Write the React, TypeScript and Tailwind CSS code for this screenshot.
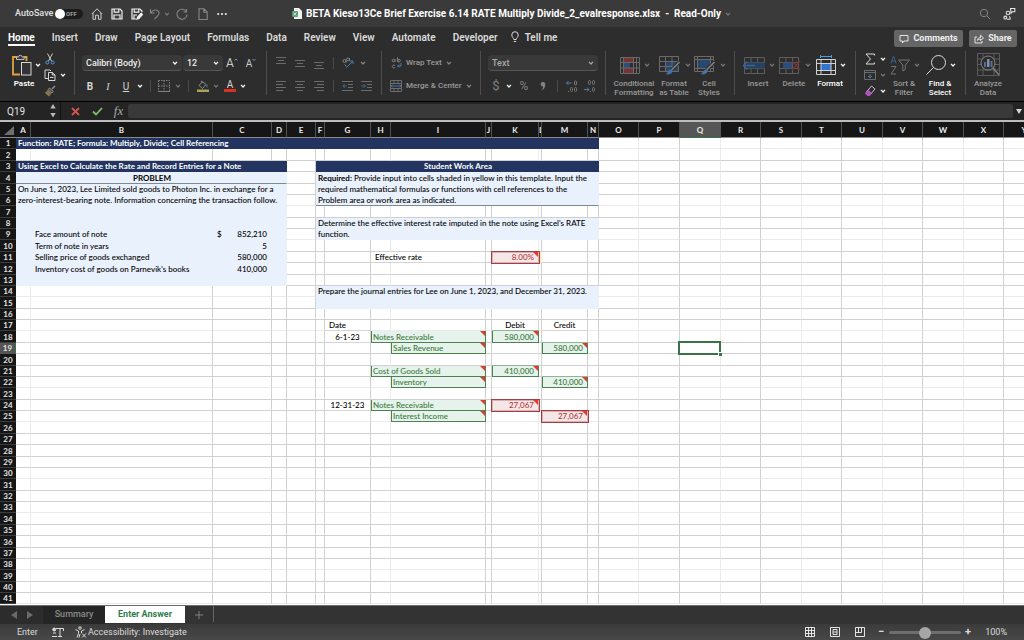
import React from 'react';
import clsx from 'clsx';

const COLUMNS = [
    { name: 'A', width: 'w-[15px]', soft: true },
    { name: 'B', width: 'w-[182px]' },
    { name: 'C', width: 'w-[59px]' },
    { name: 'D', width: 'w-[15px]' },
    { name: 'E', width: 'w-[29px]' },
    { name: 'F', width: 'w-[9px]' },
    { name: 'G', width: 'w-[46px]' },
    { name: 'H', width: 'w-[20px]', soft: true },
    { name: 'I', width: 'w-[95px]' },
    { name: 'J', width: 'w-[6px]' },
    { name: 'K', width: 'w-[47px]', soft: true },
    { name: 'L', width: 'w-[3px]' },
    { name: 'M', width: 'w-[46px]' },
    { name: 'N', width: 'w-[11px]' },
    { name: 'O', width: 'w-[40px]', soft: true },
    { name: 'P', width: 'w-[41px]' },
    { name: 'Q', width: 'w-[41px]', soft: true },
    { name: 'R', width: 'w-[40px]' },
    { name: 'S', width: 'w-[41px]', soft: true },
    { name: 'T', width: 'w-[40px]' },
    { name: 'U', width: 'w-[41px]', soft: true },
    { name: 'V', width: 'w-[40px]' },
    { name: 'W', width: 'w-[41px]', soft: true },
    { name: 'X', width: 'w-[40px]' },
    { name: 'Y', width: 'w-[41px]' },
];

const ROW_COUNT = 41;

type Cell = {
    span?: number;
    text?: React.ReactNode;
    look: string;
    note?: boolean;
    selected?: boolean;
};

const NAVY = 'bg-[#22345f] border-[#22345f] text-white font-bold pl-0.5';
const PALE = 'bg-[#e9f1fc] border-[#e9f1fc] pl-0.5';
const PALE_RULE = 'bg-[#e9f1fc] border-r-[#e9f1fc] border-b-[#808890] pl-0.5';
const PLAIN = 'border-[#d4d4d4]';
const GREEN = 'bg-[#e6f2ec] text-[#3a7a3a] border-l border-l-[#4b8250] border-r-[#4b8250] border-b-[#4b8250]';
const GREEN_BOX = 'bg-[#e6f2ec] text-[#3a7a3a] text-right pr-1 border-l border-[#4b8250] shadow-[0_-1px_0_#8fb596]';
const RED_BOX = 'z-10 bg-[#f5e6e8] text-[#b03a3a] text-right pr-1 border-[#d9b0b3] shadow-[0_0_0_1px_#a04040,inset_1px_1px_0_#d9b0b3]';

const SHEET: Record<number, Record<string, Cell>> = {
    1: { A: { span: 14, look: NAVY, text: 'Function: RATE; Formula: Multiply, Divide; Cell Referencing' } },
    3: {
        A: { span: 4, look: NAVY, text: 'Using Excel to Calculate the Rate and Record Entries for a Note' },
        F: { span: 9, look: clsx(NAVY, 'text-center'), text: 'Student Work Area' },
    },
    4: {
        A: { span: 4, look: clsx(PALE_RULE, 'text-center font-bold'), text: 'PROBLEM' },
        F: { span: 9, look: PALE, text: <><b>Required:</b> Provide input into cells shaded in yellow in this template. Input the</> },
    },
    5: {
        A: { span: 4, look: PALE, text: 'On June 1, 2023, Lee Limited sold goods to Photon Inc. in exchange for a' },
        F: { span: 9, look: PALE, text: 'required mathematical formulas or functions with cell references to the' },
    },
    6: {
        A: { span: 4, look: PALE, text: 'zero-interest-bearing note. Information concerning the transaction follow.' },
        F: { span: 9, look: PALE_RULE, text: 'Problem area or work area as indicated.' },
    },
    7: { A: { span: 4, look: PALE } },
    8: {
        A: { span: 4, look: PALE },
        F: { span: 9, look: PALE, text: "Determine the effective interest rate imputed in the note using Excel's RATE" },
    },
    9: {
        A: { look: PALE },
        B: { look: clsx(PALE, 'pl-1'), text: 'Face amount of note' },
        C: { look: clsx(PALE, 'pr-1'), text: <span className="flex justify-between pl-0.5"><span>$</span><span>852,210</span></span> },
        D: { look: PALE },
        F: { span: 9, look: PALE, text: 'function.' },
    },
    10: {
        A: { look: PALE },
        B: { look: clsx(PALE, 'pl-1'), text: 'Term of note in years' },
        C: { look: clsx(PALE, 'pr-1 text-right'), text: '5' },
        D: { look: PALE },
    },
    11: {
        A: { look: PALE },
        B: { look: clsx(PALE, 'pl-1'), text: 'Selling price of goods exchanged' },
        C: { look: clsx(PALE, 'pr-1 text-right'), text: '580,000' },
        D: { look: PALE },
        H: { span: 2, look: clsx(PLAIN, 'pl-1'), text: 'Effective rate' },
        K: { look: RED_BOX, text: '8.00%', note: true },
        L: { look: 'bg-[#fdeecb] border-[#fdeecb]' },
    },
    12: {
        A: { look: PALE },
        B: { look: clsx(PALE, 'pl-1'), text: "Inventory cost of goods on Parnevik's books" },
        C: { look: clsx(PALE, 'pr-1 text-right'), text: '410,000' },
        D: { look: PALE },
    },
    13: { A: { span: 4, look: PALE } },
    14: { F: { span: 9, look: PALE, text: 'Prepare the journal entries for Lee on June 1, 2023, and December 31, 2023.' } },
    15: { F: { span: 9, look: PALE } },
    17: {
        G: { look: clsx(PLAIN, 'pl-1'), text: 'Date' },
        K: { look: clsx(PLAIN, 'text-center'), text: 'Debit' },
        M: { look: clsx(PLAIN, 'text-center'), text: 'Credit' },
    },
    18: {
        G: { look: clsx(PLAIN, 'text-center'), text: '6-1-23' },
        H: { span: 2, look: clsx(GREEN, 'pl-px'), text: 'Notes Receivable', note: true },
        K: { look: GREEN_BOX, text: '580,000', note: true },
    },
    19: {
        I: { look: clsx(GREEN, 'pl-px'), text: 'Sales Revenue', note: true },
        M: { look: GREEN_BOX, text: '580,000', note: true },
        Q: { look: PLAIN, selected: true },
    },
    21: {
        H: { span: 2, look: clsx(GREEN, 'pl-px'), text: 'Cost of Goods Sold', note: true },
        K: { look: GREEN_BOX, text: '410,000', note: true },
    },
    22: {
        I: { look: clsx(GREEN, 'pl-px'), text: 'Inventory', note: true },
        M: { look: GREEN_BOX, text: '410,000', note: true },
    },
    24: {
        G: { look: clsx(PLAIN, 'text-center'), text: '12-31-23' },
        H: { span: 2, look: clsx(GREEN, 'pl-px'), text: 'Notes Receivable', note: true },
        K: { look: RED_BOX, text: '27,067', note: true },
    },
    25: {
        I: { look: clsx(GREEN, 'pl-px'), text: 'Interest Income', note: true },
        M: { look: RED_BOX, text: '27,067', note: true },
    },
};

const TABS = ['Home', 'Insert', 'Draw', 'Page Layout', 'Formulas', 'Data', 'Review', 'View', 'Automate', 'Developer'];

/* ---------- small pieces ---------- */

function Chevron({ className = 'text-white' }: { className?: string }) {
    return (
        <svg viewBox="0 0 6 4" className={clsx('w-1.5 h-1 shrink-0', className)} fill="none" stroke="currentColor" strokeWidth="1.2">
            <path d="M1 .8 3 3 5 .8" />
        </svg>
    );
}

function Tool({ label, className, children }: { label: string; className: string; children: React.ReactNode }) {
    return (
        <button type="button" aria-label={label} className={clsx('flex h-4 items-center justify-center shrink-0', className)}>
            {children}
        </button>
    );
}

function Divider({ box }: { box: string }) {
    return (
        <span className={clsx('flex h-3 justify-center shrink-0', box)}>
            <span className="w-px bg-[#4a4a4a]" />
        </span>
    );
}

function GroupLine() {
    return <span className="w-px h-11 bg-[#4d4d4d] shrink-0" />;
}

function Dropdown({ label, value, className, dim }: { label: string; value: string; className: string; dim?: boolean }) {
    return (
        <div className={clsx('relative h-4 shrink-0', className)}>
            <select
                aria-label={label}
                className={clsx('block w-full h-4 appearance-none rounded-sm bg-[#393939] border-b border-[#565656] pl-1 text-[9px] leading-[14px] font-medium', dim ? 'text-[#a8a8a8]' : 'text-[#ececec]')}
            >
                <option>{value}</option>
            </select>
            <span className="absolute right-1 top-1.5 pointer-events-none">
                <Chevron className={clsx('block', dim ? 'text-[#a8a8a8]' : 'text-white')} />
            </span>
        </div>
    );
}

function BigTool({ className, icon, lines, active }: { className: string; icon: React.ReactNode; lines: string[]; active?: boolean }) {
    return (
        <button type="button" className={clsx('flex flex-col items-center shrink-0', className, active ? 'text-white' : 'text-[#9a9a9a]')}>
            <span className={clsx('flex h-7 items-center gap-1 -mr-0.5', !active && 'opacity-80')}>
                {icon}
                <Chevron className={active ? 'text-white' : 'text-[#8a8a8a]'} />
            </span>
            {lines.map((line) => (
                <span key={line} className="text-[8px] leading-[9px] font-medium whitespace-nowrap">{line}</span>
            ))}
        </button>
    );
}

function Lines({ rows }: { rows: [number, number, number][] }) {
    return (
        <svg viewBox="0 0 12 12" className="size-3 shrink-0" stroke="#6c6c6c" strokeWidth="1">
            {rows.map(([x1, x2, y]) => <path key={y} d={`M${x1} ${y + 0.5}H${x2}`} />)}
        </svg>
    );
}

function Indent({ flip }: { flip?: boolean }) {
    return (
        <svg viewBox="0 0 12 12" className="size-3 shrink-0" stroke="#6c6c6c" fill="none">
            <path d="M0 1.5h11M6 4.5h5M6 7.5h5M0 10.5h11" />
            <path d={flip ? 'M0 6h4M2.5 4l2 2-2 2' : 'M1 6h4M2.8 4l-2 2 2 2'} stroke="#41698f" />
        </svg>
    );
}

/* ---------- title bar ---------- */

function TitleBar() {
    return (
        <header className="flex h-[27px] shrink-0 items-center bg-[#3a3a3a] text-[#e0e0e0]">
            <div className="flex flex-1 items-center pl-[15px]">
                <label htmlFor="autosave" className="text-[9px] font-medium w-10 whitespace-nowrap">AutoSave</label>
                <span className="relative flex h-2.5 w-7 items-center rounded-full bg-[#1c1c1c]">
                    <input id="autosave" type="checkbox" role="switch" className="peer absolute inset-0 appearance-none" />
                    <span className="size-2.5 rounded-full bg-white pointer-events-none" />
                    <span className="pl-px text-[6px] font-medium text-[#b8b8b8] pointer-events-none">OFF</span>
                </span>
                <div className="flex items-center pl-1">
                    <Tool label="Home" className="w-5">
                        <svg viewBox="0 0 12 12" className="size-3" fill="none" stroke="#cfcfcf"><path d="M.8 6 6 .8 11.2 6M2 5v6.3h2.6V7.2h2.8v4.1H10V5" /></svg>
                    </Tool>
                    <Tool label="Save" className="w-5">
                        <svg viewBox="0 0 12 12" className="size-3" fill="none" stroke="#f0f0f0" strokeWidth="1.2"><path d="M1 1h8l2 2v8H1zM3.2 1v3.2h4.6V1M3 11V7h6v4" /></svg>
                    </Tool>
                    <Tool label="Save as" className="w-[19px]">
                        <svg viewBox="0 0 12 12" className="size-3" fill="none" stroke="#f0f0f0" strokeWidth="1.2"><path d="M5 11H1V1h8l2 2v1M3.2 1v3.2h4.6V1M3 11V7h3" /><path d="m6 11 .6-2L10.2 5.2l1.3 1.3L8 10.4z" fill="#f0f0f0" /></svg>
                    </Tool>
                    <Tool label="Undo" className="w-[18px]">
                        <svg viewBox="0 0 12 12" className="size-3" fill="none" stroke="#858585" strokeWidth="1.1"><path d="M1.5 1v4h4M1.5 5C4 1.2 9 1 10 4.5c.6 2.5-2 4-4.5 6.5" /></svg>
                    </Tool>
                    <Chevron className="text-[#757575]" />
                    <Tool label="Redo" className="w-6">
                        <svg viewBox="0 0 12 12" className="size-3" fill="none" stroke="#858585" strokeWidth="1.1"><path d="M10.5 1v3h-3M10.5 4A5 5 0 1 0 11 6.5" /></svg>
                    </Tool>
                    <Tool label="New" className="w-[18px]">
                        <svg viewBox="0 0 12 12" className="size-3" fill="none" stroke="#858585" strokeWidth="1.1"><path d="M2 .8h5L10.2 4v7.5H2zM6.8.8v3.5h3.4" /></svg>
                    </Tool>
                    <Tool label="More" className="w-5">
                        <svg viewBox="0 0 10 4" className="w-2.5 h-1" fill="#eaeaea"><circle cx="1.2" cy="2" r="1.1" /><circle cx="5" cy="2" r="1.1" /><circle cx="8.8" cy="2" r="1.1" /></svg>
                    </Tool>
                </div>
            </div>
            <div className="flex items-center gap-1 pr-2">
                <svg viewBox="0 0 10 11" className="w-2.5 h-[11px]"><path d="M2 0h5l3 3v8H2z" fill="#f0f3f0" /><rect y="3" width="6" height="6" rx="1" fill="#5e9c74" /><path d="m1.7 4.5 2.6 3M4.3 4.500l-2.6 3" stroke="#dff0e4" strokeWidth=".8" /></svg>
                <h1 className="text-[10px] font-bold text-white whitespace-pre">BETA Kieso13Ce Brief Exercise 6.14 RATE Multiply Divide_2_evalresponse.xlsx  -  Read-Only</h1>
                <Chevron className="text-[#757575]" />
            </div>
            <div className="flex flex-1 items-center justify-end gap-3 pr-2">
                <svg viewBox="0 0 12 12" className="size-3" fill="none" stroke="#858585"><circle cx="5" cy="5" r="3.7" /><path d="m7.8 7.8 3.4 3.4" /></svg>
                <svg viewBox="0 0 13 13" className="size-[13px]" fill="none" stroke="#e4e4e4" strokeWidth="1.1"><circle cx="5" cy="6" r="1.8" /><circle cx="2.3" cy="10.5" r="1.4" /><path d="M4 12.3h2.5c1 0 1-2.500-.5-2.800M7.5 1.5h4.3v3.3H9.5L8 6.2V4.8z" /></svg>
            </div>
        </header>
    );
}

/* ---------- ribbon ---------- */

function RibbonTabs() {
    return (
        <div className="flex h-5 shrink-0 items-start justify-between pl-2 pr-[7px]">
            <nav className="flex gap-[17px] pt-1 text-[10px] leading-[13px] font-semibold text-[#dadada]">
                {TABS.map((tab) => (
                    <a key={tab} href="#" className={clsx('whitespace-nowrap', tab === 'Home' && 'h-[15px] border-b-2 border-white text-white font-bold')}>{tab}</a>
                ))}
                <a href="#" className="flex gap-1.5 -ml-1 whitespace-nowrap">
                    <svg viewBox="0 0 8 12" className="w-2 h-3" fill="none" stroke="#dadada"><path d="M2.8 8.5C2.8 7 .8 6.3.8 3.9a3.2 3.2 0 0 1 6.4 0C7.2 6.3 5.2 7 5.2 8.5zM2.8 10.5h2.4" /></svg>
                    Tell me
                </a>
            </nav>
            <div className="flex gap-1.5 pt-[3px] text-[9px] font-bold text-[#efefef]">
                <button type="button" className="flex h-[17px] w-[69px] items-center justify-center gap-1 rounded-xs bg-[#656565]">
                    <svg viewBox="0 0 10 10" className="size-2.5" fill="none" stroke="#e4e4e4"><path d="M1 1.5h8V7H5L3.5 9V7H1z" /></svg>
                    Comments
                </button>
                <button type="button" className="flex h-[17px] w-12 items-center justify-center gap-1 rounded-xs bg-[#656565]">
                    <svg viewBox="0 0 10 10" className="size-2.5" fill="none" stroke="#e4e4e4"><path d="M3 3H1v6h7V7M3.5 6.5c0-2 1.5-3 3-3V1.2L9.5 4l-3 2.5V5C5 5 4 5.500 3.500 6.500z" /></svg>
                    Share
                </button>
            </div>
        </div>
    );
}

function ClipboardGroup() {
    return (
        <div className="flex w-[74px] pl-2 shrink-0">
            <button type="button" className="flex w-8 flex-col items-center">
                <span className="flex h-7 items-center gap-[3px] pl-1">
                    <svg viewBox="0 0 20 22" className="w-5 h-[22px]" fill="none">
                        <path d="M8 20.5H1V3h4.5M11.5 3h3v4" stroke="#e0a344" strokeWidth="1.8" />
                        <path d="M4.5 5.5V3h2a1.8 1.8 0 0 1 3.6 0h2v2.500z" fill="#3a3a3a" stroke="#bdbdbd" />
                        <rect x="9.5" y="8.5" width="9.5" height="12.5" fill="#333" stroke="#d6d6d6" />
                    </svg>
                    <Chevron />
                </span>
                <span className="text-[8px] leading-[9px] font-semibold text-white">Paste</span>
            </button>
            <div className="flex flex-col pl-1">
                <Tool label="Cut" className="w-3">
                    <svg viewBox="0 0 10 12" className="w-2.5 h-3" fill="none"><path d="M2.500.5 6.500 8M7.500.5 3.500 8" stroke="#c8c8c8" /><circle cx="2.3" cy="9.5" r="1.5" stroke="#4f9be0" /><circle cx="7.7" cy="9.5" r="1.5" stroke="#4f9be0" /></svg>
                </Tool>
                <span className="flex items-center gap-1">
                    <Tool label="Copy" className="w-3">
                        <svg viewBox="0 0 12 12" className="size-3" fill="none" stroke="#d6d6d6"><path d="M4 9.5H1V1h5l1 1M4.5 3.5h4L11 6v5.5H4.5zM8.3 3.5V6H11M6 8.5h3.5" /></svg>
                    </Tool>
                    <Chevron />
                </span>
                <Tool label="Format painter" className="w-3">
                    <svg viewBox="0 0 12 12" className="size-3" fill="none"><path d="M11 1 8 4" stroke="#8c8c8c" strokeWidth="1.6" /><path d="m5.500 3 3.800 3.500L8 8 4 4.500z" stroke="#8c8c8c" fill="#4a4a4a" /><path d="M3.800 5 7.500 8.300 5 11.500.8 8z" fill="#8a744a" /></svg>
                </Tool>
            </div>
        </div>
    );
}

function FontGroup() {
    return (
        <div className="flex w-[191px] flex-col gap-[7px] pl-[7px] pt-1 shrink-0">
            <div className="flex items-center">
                <Dropdown label="Font" value="Calibri (Body)" className="w-[100px]" />
                <Dropdown label="Font size" value="12" className="w-10 ml-px" />
                <Tool label="Increase font size" className="w-[18px] text-[#c8c8c8]">
                    <span className="text-xs">A</span>
                    <svg viewBox="0 0 4 10" className="w-1 h-2.5" fill="none" stroke="#4f9be0"><path d="M.5 2.500 2 1l1.500 1.500" /></svg>
                </Tool>
                <Tool label="Decrease font size" className="w-5 text-[#c8c8c8]">
                    <span className="text-[10px]">A</span>
                    <svg viewBox="0 0 4 10" className="w-1 h-2.5" fill="none" stroke="#4f9be0"><path d="M.5 1 2 2.500 3.500 1" /></svg>
                </Tool>
            </div>
            <div className="flex items-center text-[10px] text-[#d6d6d6]">
                <Tool label="Bold" className="w-4"><b>B</b></Tool>
                <Tool label="Italic" className="w-5"><i className="font-['Liberation_Serif']">I</i></Tool>
                <Tool label="Underline" className="w-4"><u>U</u></Tool>
                <Tool label="Underline styles" className="w-3"><Chevron /></Tool>
                <Divider box="w-2" />
                <Tool label="Borders" className="w-5">
                    <svg viewBox="0 0 12 12" className="size-3" fill="none" stroke="#808080"><path d="M.5.5h11v11M.5.5v11M6 .5v11M.5 6h11" strokeDasharray="1.5 1" /><path d="M0 11.5h12" /></svg>
                </Tool>
                <Tool label="Border styles" className="w-2"><Chevron className="text-[#757575]" /></Tool>
                <Divider box="w-3" />
                <Tool label="Fill colour" className="w-[18px]">
                    <svg viewBox="0 0 12 12" className="size-3" fill="none"><path d="m2 5.500 3.500-4 3.500 3-3.500 4zM4 .8l2 2" stroke="#8c8c8c" /><path d="M10 4.500v3" stroke="#4d7ca8" /><rect y="9.5" width="12" height="2.5" fill="#a9a558" /></svg>
                </Tool>
                <Tool label="Fill colours" className="w-2"><Chevron className="text-[#757575]" /></Tool>
                <Tool label="Font colour" className="w-5">
                    <span className="flex flex-col items-center">
                        <span className="text-[10px] leading-[9px]">A</span>
                        <span className="h-[3px] w-3 bg-[#e03020]" />
                    </span>
                </Tool>
                <Tool label="Font colours" className="w-1.5"><Chevron /></Tool>
            </div>
        </div>
    );
}

function AlignGroup() {
    return (
        <div className="flex w-[114px] flex-col gap-[7px] pl-1 pt-1 shrink-0">
            <div className="flex items-center">
                <Tool label="Top align" className="w-5"><Lines rows={[[1, 11, 0], [3, 9, 3], [1, 11, 6]]} /></Tool>
                <Tool label="Middle align" className="w-[18px]"><Lines rows={[[1, 11, 3], [3, 9, 6], [1, 11, 9]]} /></Tool>
                <Tool label="Bottom align" className="w-5"><Lines rows={[[1, 11, 5], [3, 9, 8], [1, 11, 11]]} /></Tool>
                <Divider box="w-2" />
                <Tool label="Orientation" className="w-[22px]">
                    <svg viewBox="0 0 12 12" className="size-3" fill="none" stroke="#808080"><circle cx="2.5" cy="4" r="1.5" /><circle cx="6" cy="2.5" r="1.5" /><path d="M4 2.500v3M2.500 7.500l2 2M7.500 1v3" /><path d="M4.500 10.500 11 4M11 7V4H8" stroke="#4d7ca8" /></svg>
                </Tool>
                <Tool label="Orientations" className="w-2"><Chevron className="text-[#858585]" /></Tool>
            </div>
            <div className="flex items-center">
                <Tool label="Align left" className="w-5"><Lines rows={[[1, 11, 1], [1, 8, 4], [1, 11, 7], [1, 8, 10]]} /></Tool>
                <Tool label="Centre" className="w-[18px]"><Lines rows={[[1, 11, 1], [3, 9, 4], [1, 11, 7], [3, 9, 10]]} /></Tool>
                <Tool label="Align right" className="w-5"><Lines rows={[[1, 11, 1], [4, 11, 4], [1, 11, 7], [4, 11, 10]]} /></Tool>
                <Divider box="w-2" />
                <Tool label="Decrease indent" className="w-[22px]"><Indent /></Tool>
                <Tool label="Increase indent" className="w-4"><Indent flip /></Tool>
            </div>
        </div>
    );
}

function WrapGroup() {
    return (
        <div className="flex w-[98px] flex-col gap-[7px] pl-2 pt-1 text-[8px] font-medium text-[#9a9a9a] shrink-0">
            <button type="button" className="flex h-4 items-center gap-1 whitespace-nowrap">
                <svg viewBox="0 0 12 12" className="size-3" fill="none" stroke="#808080"><circle cx="3.5" cy="3.5" r="1.3" /><path d="M5 2v3M7.500.5v4.500" /><circle cx="9" cy="3.7" r="1.3" /><path d="M5 8.500a1.500 1.500 0 1 0 0 2" /><path d="M11 6v3H7.500M9 7.500 7.500 9 9 10.500" stroke="#4d7ca8" /></svg>
                Wrap Text
                <Chevron className="text-[#858585]" />
            </button>
            <button type="button" className="flex h-4 items-center gap-1 whitespace-nowrap">
                <svg viewBox="0 0 12 12" className="size-3" fill="none" stroke="#6c6c6c"><path d="M.5.5h11v11H.5zM.5 3.500h11M.5 8.500h11M4 .5v3M8 .5v3M4 8.500v3M8 8.500v3" /><path d="M1 6h10M2.500 4.700 1.200 6l1.300 1.300M9.500 4.700 10.800 6 9.500 7.300" stroke="#3f74b0" /></svg>
                Merge &amp; Center
                <Chevron className="text-[#858585]" />
            </button>
        </div>
    );
}

function NumberGroup() {
    return (
        <div className="flex w-[124px] flex-col gap-[7px] pl-[7px] pt-1 shrink-0">
            <Dropdown label="Number format" value="Text" className="w-[110px]" dim />
            <div className="flex items-center text-[13px] text-[#808080]">
                <Tool label="Currency" className="w-4">$</Tool>
                <Tool label="Currencies" className="w-2.5"><Chevron /></Tool>
                <Tool label="Percent" className="w-5 text-xs">%</Tool>
                <Tool label="Comma style" className="w-[18px]">
                    <svg viewBox="0 0 6 9" className="w-1.5 h-[9px]" fill="#808080"><path d="M.7 2.200a2.300 2.300 0 0 1 4.600 0C5.500 5 4 7.500 1.500 8.500 2.800 7 3.200 5.500 3 4.500 1.800 4.500.7 3.600.7 2.200z" /></svg>
                </Tool>
                <Divider box="w-2.5" />
                <Tool label="Increase decimal" className="w-5">
                    <svg viewBox="0 0 12 12" className="size-3" fill="none" stroke="#757575"><path d="M.5 3h5M2.500 1l-2 2 2 2" stroke="#4d7ca8" /><rect x="8.5" y="1" width="2" height="4" rx="1" /><rect x="4.5" y="7.5" width="2" height="4" rx="1" /><rect x="8.5" y="7.5" width="2" height="4" rx="1" /><path d="M2 11.500h1" /></svg>
                </Tool>
                <Tool label="Decrease decimal" className="w-4">
                    <svg viewBox="0 0 12 12" className="size-3" fill="none" stroke="#757575"><rect x="4.5" y=".5" width="2" height="4" rx="1" /><rect x="8.5" y=".5" width="2" height="4" rx="1" /><path d="M0 9.500h5M3 7.500l2 2-2 2" stroke="#4d7ca8" /><rect x="8.5" y="7.5" width="2" height="4" rx="1" /><path d="M6 11.500h1" /></svg>
                </Tool>
            </div>
        </div>
    );
}

function StylesGroup() {
    return (
        <div className="flex w-[128px] pl-2 shrink-0">
            <BigTool className="w-10 mr-0.5" lines={['Conditional', 'Formatting']} icon={
                <svg viewBox="0 0 20 17" className="w-5 h-[17px]" fill="none"><path d="M4 1h9v5H4zM4 11h9v5H4z" fill="#8a3535" /><path d="M4 6h6v5H4z" fill="#2c568c" /><path d="M.5.5h19v16H.5zM.5 5.5h19M.5 11h19M3.5.5v16M13.5.5v16M16.5.5v16" stroke="#7a7a7a" /></svg>
            } />
            <BigTool className="w-9" lines={['Format', 'as Table']} icon={
                <svg viewBox="0 0 22 19" className="w-[22px] h-[19px]" fill="none"><path d="M6 6h14v10H6z" fill="#294f80" /><path d="M.5.5h19v15H.5zM.5 5.5h19M.5 10.5h19M6.5.5v15M13 .5v15" stroke="#7a7a7a" /><path d="m20.5 6-8 8" stroke="#2d2d2d" strokeWidth="3.5" /><path d="m20.5 6-8 8" stroke="#9a9a9a" strokeWidth="1.6" /><path d="M12.5 13.5c-3-.5-3 3-6 4.500 3 1.300 7 0 7-3.500z" fill="#4a86c4" /></svg>
            } />
            <BigTool className="w-[34px]" lines={['Cell', 'Styles']} icon={
                <svg viewBox="0 0 22 19" className="w-[22px] h-[19px]" fill="none"><path d="M4 4h12v8H4z" fill="#294f80" /><path d="M.5.5h19v15H.5zM.5 3.5h19M.5 12.5h19M3.5.5v15M16.5.5v15" stroke="#7a7a7a" /><path d="m20.5 6-8 8" stroke="#2d2d2d" strokeWidth="3.5" /><path d="m20.5 6-8 8" stroke="#9a9a9a" strokeWidth="1.6" /><path d="M12.5 13.5c-3-.5-3 3-6 4.500 3 1.300 7 0 7-3.500z" fill="#4a86c4" /></svg>
            } />
        </div>
    );
}

function CellsGroup() {
    return (
        <div className="flex w-[120px] pl-[5px] shrink-0">
            <BigTool className="w-9" lines={['Insert']} icon={
                <svg viewBox="0 0 22 17" className="w-[22px] h-[17px]" fill="none"><path d="M1.5.5h20v16h-20zM1.5 5.5h20M1.5 11.5h20M8 .5v16M14.5.5v16" stroke="#6a6a6a" /><path d="M4 5.5h18v6H4z" fill="#26466e" /><path d="M0 8.500h12M4.500 4.500l-4 4 4 4" stroke="#3c72b0" strokeWidth="1.4" /></svg>
            } />
            <BigTool className="w-9" lines={['Delete']} icon={
                <svg viewBox="0 0 22 17" className="w-[22px] h-[17px]" fill="none"><path d="M.5.5h19v16H.5zM.5 5.5h19M.5 11.5h19M7 .5v16M13.5.5v16" stroke="#6a6a6a" /><path d="M4 5.5h9v6H4z" fill="#2a5590" /><path d="m13 4 8 9M21 4l-8 9" stroke="#8a3535" strokeWidth="1.4" /></svg>
            } />
            <BigTool className="w-9" active lines={['Format']} icon={
                <svg viewBox="0 0 20 21" className="w-5 h-[21px]" fill="none"><path d="M4.500 1.500h11M4.500 0v3M15.500 0v3" stroke="#4f9be0" /><path d="M5 9h10v6H5z" fill="#2f74d0" /><path d="M.5 4.500h19v15H.5zM.5 8.500h19M.5 15.500h19M5 4.500v15M15 4.500v15" stroke="#d0d0d0" /></svg>
            } />
        </div>
    );
}

function EditingGroup() {
    return (
        <div className="flex w-[109px] shrink-0">
            <div className="flex w-[31px] flex-col pl-2">
                <span className="flex items-center gap-1">
                    <Tool label="AutoSum" className="w-3">
                        <svg viewBox="0 0 10 12" className="w-2.5 h-3" fill="none" stroke="#dcdcdc"><path d="M9.500 2.500V1H1l4.500 5L1 11h8.500V9.500" /></svg>
                    </Tool>
                    <Chevron />
                </span>
                <span className="flex items-center gap-1">
                    <Tool label="Fill" className="w-3">
                        <svg viewBox="0 0 12 10" className="w-3 h-2.5" fill="none"><path d="M.5.5h11v9H.5zM.5 2.500h11" stroke="#6c6c6c" /><path d="M6 4v4M4 6l2 2 2-2" stroke="#4d7ca8" /></svg>
                    </Tool>
                    <Chevron className="text-[#757575]" />
                </span>
                <span className="flex items-center gap-1">
                    <Tool label="Clear" className="w-3">
                        <svg viewBox="0 0 12 12" className="size-3" fill="none"><path d="M7.500 1 11 4l-5.500 6.500L2 7.500z" stroke="#d8b8dc" /><path d="M4.500 5 8 8l-2.500 3h-2L1 8.700z" fill="#b04fc0" /></svg>
                    </Tool>
                    <Chevron />
                </span>
            </div>
            <BigTool className="w-[34px]" lines={['Sort &', 'Filter']} icon={
                <svg viewBox="0 0 20 20" className="size-5" fill="none"><path d="M.8 8.500 3.500 1l2.700 7.500M1.800 6h3.500" stroke="#3c6ea5" /><path d="M1 11.500h5L1 19h5" stroke="#858585" /><path d="M8.500 5h11l-4.200 5v4.500l-2.500 1.500v-6z" stroke="#858585" /></svg>
            } />
            <BigTool className="w-[38px]" active lines={['Find &', 'Select']} icon={
                <svg viewBox="0 0 20 20" className="size-5" fill="none" stroke="#dcdcdc"><circle cx="12.5" cy="7.5" r="7" /><path d="m7.500 12.500-7 7" /></svg>
            } />
        </div>
    );
}

function AnalyzeGroup() {
    return (
        <div className="flex w-11 shrink-0 justify-center pt-0.5 text-[#9a9a9a]">
            <button type="button" className="flex flex-col items-center text-[8px] leading-[9px] font-medium">
                <svg viewBox="0 0 23 23" className="size-[23px] mb-[3px]" fill="none">
                    <path d="M.5.5h22v22H.5zM.5 6h22M.5 11.500h22M.5 17h22M6 .5v22M17 .5v22" stroke="#5c5c5c" />
                    <circle cx="11" cy="10" r="7" fill="#2d2d2d" stroke="#858585" />
                    <path d="M7 9h2v5H7z" fill="#3f74ac" />
                    <path d="M10 6h2.500v8H10z" fill="#909090" />
                    <path d="M13.500 8h2v6h-2z" fill="#3f74ac" />
                    <path d="m16 15 6 7" stroke="#858585" strokeWidth="1.3" />
                </svg>
                <span>Analyze</span>
                <span>Data</span>
            </button>
        </div>
    );
}

/* ---------- formula bar ---------- */

function FormulaBar() {
    return (
        <div className="flex h-[18px] shrink-0 items-center bg-[#242424] text-[#e4e4e4]">
            <input aria-label="Name box" defaultValue="Q19" className="w-[50px] pl-[7px] text-[10px] bg-transparent" />
            <svg viewBox="0 0 6 14" className="w-1.5 h-3.5 shrink-0" fill="#b8b8b8"><path d="m3 0 2.700 4.500H.3zM3 13.500.3 9h5.400z" /></svg>
            <span className="w-px h-[18px] ml-1 bg-[#111] shrink-0" />
            <Tool label="Cancel" className="w-7">
                <svg viewBox="0 0 9 9" className="size-[9px]" stroke="#d8534c" strokeWidth="1.8"><path d="m1 1 7 7M8 1 1 8" /></svg>
            </Tool>
            <Tool label="Enter" className="w-4">
                <svg viewBox="0 0 11 9" className="w-[11px] h-[9px]" fill="none" stroke="#7cc36a" strokeWidth="1.8"><path d="m1 4.500 3 3L10 1" /></svg>
            </Tool>
            <Tool label="Insert function" className="w-[23px]">
                <i className="pl-1 text-[13px] font-['Liberation_Serif'] text-[#a8a8a8]">fx</i>
            </Tool>
            <input aria-label="Formula" className="h-3.5 min-w-0 flex-1 rounded-xs bg-[#393939]" />
            <Tool label="Expand formula bar" className="w-[11px]">
                <svg viewBox="0 0 6 5" className="w-1.5 h-[5px]" fill="#d6d6d6"><path d="M0 0h6L3 5z" /></svg>
            </Tool>
        </div>
    );
}

/* ---------- sheet ---------- */

const isTall = (row: number) => [2, 4, 7].includes(row % 8);
const isSoft = (row: number) => [1, 6].includes(row % 8);

function SheetRow({ row }: { row: number }) {
    const cells: React.ReactNode[] = [];

    for (let i = 0; i < COLUMNS.length; i++) {
        const col = COLUMNS[i];
        const cell = SHEET[row]?.[col.name];

        if (!cell) {
            cells.push(
                <td key={col.name} className={clsx('border-r border-b', col.soft ? 'border-r-[#ebebeb]' : 'border-r-[#d0d0d0]', isSoft(row) ? 'border-b-[#ebebeb]' : 'border-b-[#d0d0d0]')} />
            );
            continue;
        }

        cells.push(
            <td key={col.name} colSpan={cell.span} className={clsx('relative border-r border-b whitespace-nowrap', cell.look)}>
                {cell.text}
                {cell.note && <span className="absolute right-0 top-0 border-t-5 border-l-5 border-t-[#e8382c] border-l-transparent" />}
                {cell.selected && (
                    <>
                        <span className="absolute -top-0.5 -left-0.5 -right-px -bottom-0.5 border-2 border-[#3a7248]" />
                        <span className="absolute -bottom-[3px] -right-0.5 size-1 border-t border-l border-white bg-[#3a7248]" />
                    </>
                )}
            </td>
        );
        i += (cell.span ?? 1) - 1;
    }

    return (
        <tr className={isTall(row) ? 'h-3' : 'h-[11px]'}>
            <th className={clsx('border-b text-[8px] font-bold text-[#e4e4e4]', row === 19 ? 'bg-[#555] border-[#555] border-r border-r-[#3a7248]' : 'bg-[#161616] border-[#3c3c3c]')}>{row}</th>
            {cells}
        </tr>
    );
}

function Sheet() {
    return (
        <main className="flex-1 min-h-0 overflow-hidden border-t-2 border-[#bdbdbd] bg-white">
            <table className="w-full table-fixed border-separate border-spacing-0 font-['Lato','Liberation_Sans',sans-serif] text-[8px] leading-[10px] font-medium text-black [&_td]:py-0 [&_th]:p-0">
                <colgroup>
                    <col className="w-4" />
                    {COLUMNS.map((col) => <col key={col.name} className={col.width} />)}
                </colgroup>
                <thead>
                    <tr className="h-4">
                        <th className="bg-[#161616] border-b border-[#8a8a8a]">
                            <svg viewBox="0 0 16 15" className="block w-4 h-[15px]" fill="#6f6f6f"><path d="M14 4v9H4z" /></svg>
                        </th>
                        {COLUMNS.map((col) => (
                            <th
                                key={col.name}
                                className={clsx('overflow-hidden border-r border-b font-bold text-[#ececec]', col.name === 'Q' ? 'bg-[#565656] border-r-[#565656] border-b-[#3a7248]' : 'bg-[#161616] border-r-[#505050] border-b-[#8a8a8a]')}
                            >
                                {col.name}
                            </th>
                        ))}
                    </tr>
                </thead>
                <tbody>
                    {Array.from({ length: ROW_COUNT }, (_, i) => <SheetRow key={i} row={i + 1} />)}
                </tbody>
            </table>
        </main>
    );
}

/* ---------- bottom bars ---------- */

function SheetTabs() {
    return (
        <div className="flex h-[19px] shrink-0 items-start border-t border-[#6a706c] bg-[#333] text-[9px]">
            <div className="flex h-[18px] w-[43px] items-center justify-center gap-2.5 bg-[#2c2c2c]">
                <button type="button" aria-label="Previous sheet"><svg viewBox="0 0 6 8" className="w-1.5 h-2" fill="#6a6a6a"><path d="M6 0v8L0 4z" /></svg></button>
                <button type="button" aria-label="Next sheet"><svg viewBox="0 0 6 8" className="w-1.5 h-2" fill="#6a6a6a"><path d="M0 0v8l6-4z" /></svg></button>
            </div>
            <button type="button" className="h-[18px] w-[62px] bg-[#252525] font-medium text-[#8a8a8a]">Summary</button>
            <button type="button" className="h-[17px] w-20 bg-white font-bold text-[#2f7d4c] whitespace-nowrap">Enter Answer</button>
            <button type="button" aria-label="New sheet" className="flex h-[18px] w-7 items-center justify-center">
                <svg viewBox="0 0 8 8" className="size-2" stroke="#808080"><path d="M4 0v8M0 4h8" /></svg>
            </button>
            <span className="h-4 w-px bg-[#666]" />
        </div>
    );
}

function StatusBar() {
    return (
        <footer className="flex h-4 shrink-0 items-center justify-between bg-linear-to-b from-[#3b3b3b] to-[#484848] pl-[17px] pr-[17px] text-[9px] leading-4 text-[#dcdcdc]">
            <div className="flex items-center">
                <span className="w-[35px]">Enter</span>
                <svg viewBox="0 0 12 11" className="w-3 h-[11px]" fill="none" stroke="#dcdcdc"><path d="M4 1.500h7.500V4M8 1.500v8M6 9.500h4" /><path d="M0 9.500h5M1 6h3" /><circle cx="2.2" cy="2.5" r="1.5" fill="#dcdcdc" /></svg>
                <button type="button" className="flex items-center gap-px pl-[11px]">
                    <svg viewBox="0 0 12 12" className="size-3" fill="none" stroke="#dcdcdc"><circle cx="5" cy="2" r="1.3" /><path d="M.5 3.500 3.500 5v2.500L2 11.500M9.500 3.500 6.500 5v2M5 8l-1 3.500M7 7.500l4 4M11 7.500l-4 4" /></svg>
                    Accessibility: Investigate
                </button>
            </div>
            <div className="flex items-center">
                <div className="flex gap-[15px] pr-[13px]">
                    <button type="button" aria-label="Normal view"><svg viewBox="0 0 10 10" className="size-2.5" fill="none" stroke="#e4e4e4"><path d="M.5.5h9v9H.5zM.5 3.500h9M.5 6.500h9M3.500.5v9M6.500.5v9" /></svg></button>
                    <button type="button" aria-label="Page layout view"><svg viewBox="0 0 10 10" className="size-2.5" fill="none" stroke="#e4e4e4"><path d="M.5.5h9v9H.5zM3 2.500h4v5H3zM3 5h4" /></svg></button>
                    <button type="button" aria-label="Page break view"><svg viewBox="0 0 10 10" className="size-2.5" fill="none" stroke="#e4e4e4"><path d="M.5.5h9v9H.5zM3.500.5v5M6.500.5v5M.5 5.500h6" /></svg></button>
                </div>
                <span className="w-[7px] text-[11px] leading-3 font-bold">−</span>
                <input
                    type="range"
                    aria-label="Zoom"
                    className="mx-1 w-[72px] h-3 appearance-none bg-transparent [&::-webkit-slider-runnable-track]:h-[3px] [&::-webkit-slider-runnable-track]:rounded-full [&::-webkit-slider-runnable-track]:bg-[#6e6e6e] [&::-webkit-slider-thumb]:appearance-none [&::-webkit-slider-thumb]:size-3 [&::-webkit-slider-thumb]:-mt-1 [&::-webkit-slider-thumb]:rounded-full [&::-webkit-slider-thumb]:bg-[#a6a6a6]"
                />
                <span className="w-[18px] text-[11px] leading-3 font-bold">+</span>
                <span className="w-6 text-right">100%</span>
            </div>
        </footer>
    );
}

export default function App() {
    return (
        <div className="flex h-screen flex-col overflow-hidden bg-[#2d2d2d] font-['Roboto','Liberation_Sans',sans-serif]">
            <TitleBar />
            <RibbonTabs />
            <div className="flex h-[55px] shrink-0 border-b border-black bg-[#2d2d2d] pt-1">
                <ClipboardGroup />
                <GroupLine />
                <FontGroup />
                <GroupLine />
                <AlignGroup />
                <GroupLine />
                <WrapGroup />
                <GroupLine />
                <NumberGroup />
                <GroupLine />
                <StylesGroup />
                <GroupLine />
                <CellsGroup />
                <GroupLine />
                <EditingGroup />
                <GroupLine />
                <AnalyzeGroup />
            </div>
            <FormulaBar />
            <Sheet />
            <SheetTabs />
            <StatusBar />
        </div>
    );
}
